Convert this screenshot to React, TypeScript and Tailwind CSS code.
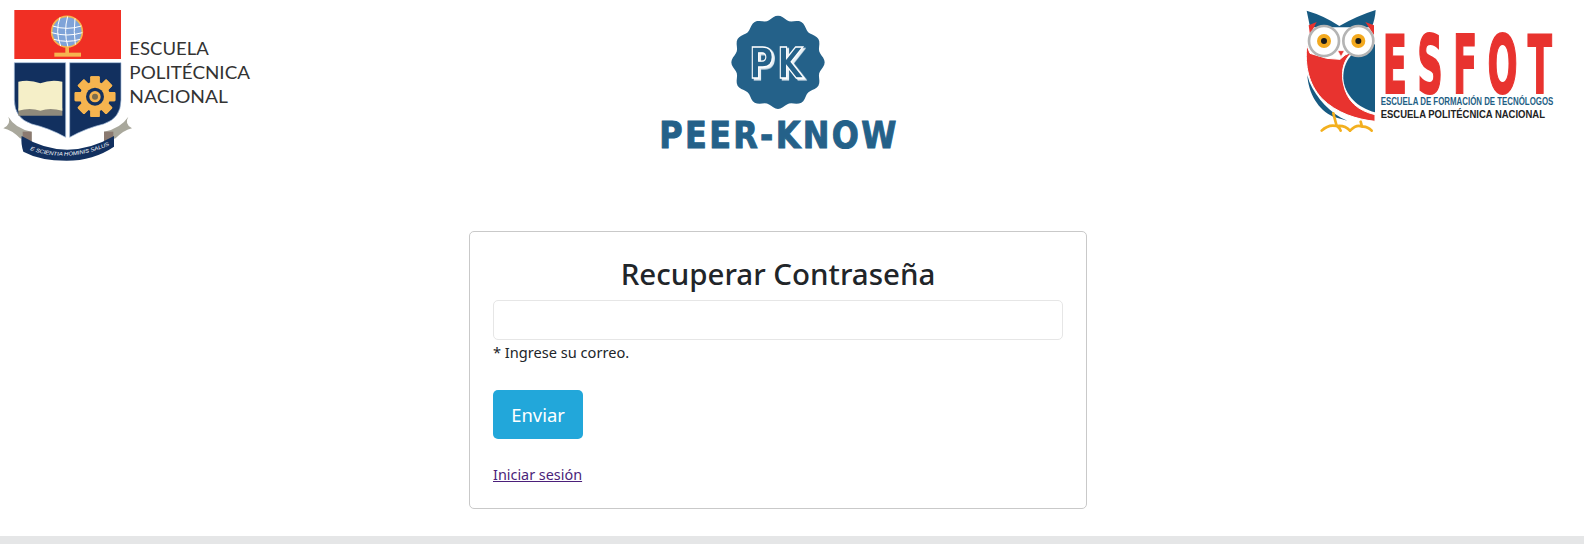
const font = { fontFamily: '"Noto Sans", sans-serif' }

// 12 soft scallops round the PK badge
const badgePath =
  Array.from({ length: 120 }, (_, i) => {
    const a = (i / 120) * Math.PI * 2
    const r = 134 + 6 * Math.cos(a * 12)
    return `${i === 0 ? "M" : "L"}${(414 + r * Math.cos(a)).toFixed(1)} ${(172 + r * Math.sin(a)).toFixed(1)}`
  }).join(" ") + " Z"

function GearTeeth() {
  return (
    <>
      {[0, 45, 90, 135, 180, 225, 270, 315].map((deg) => (
        <rect key={deg} x="271" y="229" width="28" height="122" rx="3" fill="#f6b44f" transform={`rotate(${deg} 285 290)`} />
      ))}
    </>
  )
}

function EpnLogo() {
  return (
    <svg viewBox="0 0 810 510" className="block w-[270px] h-[170px]">
      <rect x="43" y="30" width="320" height="147" fill="#f02f24" />
      <circle cx="201" cy="95" r="46" fill="#7fa3d8" stroke="#f6b44f" strokeWidth="5" />
      <g stroke="#fff" strokeWidth="3" fill="none">
        <path d="M158 78 Q201 92 244 78 M155 98 Q201 112 247 98 M162 118 Q201 130 240 118" />
        <path d="M180 52 Q165 95 182 138 M203 49 Q190 95 204 141 M225 55 Q220 95 226 134" />
      </g>
      <rect x="196" y="140" width="11" height="20" fill="#f6b44f" />
      <rect x="163" y="158" width="80" height="12" fill="#f6b44f" />

      <path d="M10 385 Q35 372 25 350 Q45 385 95 395 V425 L60 415 Q35 390 10 385 Z" fill="#a9a89c" />
      <path d="M396 385 Q372 372 385 350 Q362 385 312 395 V425 L347 415 Q372 390 396 385 Z" fill="#a9a89c" />

      <path d="M43 188 H197 V412 Q150 385 95 372 Q43 355 43 300 Z" fill="#12305f" stroke="#a8bfdc" strokeWidth="2" />
      <path d="M209 188 H363 V300 Q363 355 311 372 Q256 385 209 412 Z" fill="#12305f" stroke="#a8bfdc" strokeWidth="2" />

      <path d="M55 325 H187 V347 H55 Z" fill="#8f8a7c" />
      <path d="M55 245 Q90 238 121 250 Q152 238 187 245 V332 Q150 322 121 332 Q90 322 55 332 Z" fill="#f5efc8" />

      <GearTeeth />
      <circle cx="285" cy="290" r="45" fill="#f6b44f" />
      <circle cx="285" cy="290" r="27" fill="#12305f" />
      <circle cx="285" cy="290" r="17" fill="#f6b44f" />
      <circle cx="285" cy="290" r="9" fill="#7c6d4d" />

      <path d="M68 395 H95 V428 H68 Z" fill="#8b7a70" />
      <path d="M312 395 H340 V428 H312 Z" fill="#8b7a70" />
      <path d="M65 408 Q200 490 342 408 V440 Q280 482 200 482 Q120 482 70 455 Q62 430 65 408 Z" fill="#12305f" />
      <path id="epn-motto" d="M90 450 Q205 490 328 436" fill="none" />
      <text fontSize="16" fill="#fff" fontFamily='"Liberation Sans", sans-serif' fontStyle="italic">
        <textPath href="#epn-motto" textLength="245" lengthAdjust="spacingAndGlyphs">E SCIENTIA HOMINIS SALUS</textPath>
      </text>

      <g fill="#333" fontFamily="Lato, sans-serif" fontSize="54">
        <text x="388" y="166" textLength="238" lengthAdjust="spacingAndGlyphs">ESCUELA</text>
        <text x="388" y="238" textLength="362" lengthAdjust="spacingAndGlyphs">POLITÉCNICA</text>
        <text x="388" y="308" textLength="296" lengthAdjust="spacingAndGlyphs">NACIONAL</text>
      </g>
    </svg>
  )
}

function PeerKnowLogo() {
  return (
    <svg viewBox="0 0 810 480" className="block w-[270px] h-[160px] overflow-visible">
      <path d={badgePath} fill="#246189" />
      <text
        x="328"
        y="218"
        fontSize="130"
        fontWeight="700"
        letterSpacing="14"
        fontFamily='"DejaVu Sans", sans-serif'
        fill="#246189"
        stroke="#fff"
        strokeWidth="4"
        textLength="172"
        lengthAdjust="spacingAndGlyphs"
        className="[filter:drop-shadow(6px_5px_0_#e8f0f5)]"
      >
        PK
      </text>
      <text
        x="58"
        y="430"
        fontSize="110"
        fontWeight="700"
        letterSpacing="8"
        fontFamily='"DejaVu Sans", sans-serif'
        fill="#246189"
        stroke="#246189"
        strokeWidth="3"
        textLength="718"
        lengthAdjust="spacingAndGlyphs"
      >
        PEER-KNOW
      </text>
    </svg>
  )
}

function EsfotLogo() {
  return (
    <svg viewBox="0 0 840 420" className="block w-[280px] h-[140px] overflow-visible">
      <path d="M50 32 Q105 48 148 78 Q200 48 257 30 Q255 60 245 82 H60 Q55 55 50 32 Z" fill="#175a82" />
      <path d="M56 76 L80 66 L60 105 Z M252 76 L226 66 L252 105 Z" fill="#e8332f" />
      <path d="M52 225 C55 280 85 330 130 350 L172 362 C120 340 80 295 58 245 Z" fill="#175a82" />
      <path
        d="M50 135 C45 200 55 250 95 295 C140 340 200 358 255 364 V344 C205 332 170 305 160 250 C150 200 170 160 205 148 L165 165 L150 178 L110 175 L60 160 Z"
        fill="#e8332f"
        stroke="#fff"
        strokeWidth="3"
      />
      <path d="M255 133 C190 140 158 185 160 235 C162 285 205 325 255 337 Z" fill="#175a82" />
      <circle cx="102" cy="123" r="45" fill="#fff" stroke="#b4b4b4" strokeWidth="8" />
      <circle cx="205" cy="123" r="45" fill="#fff" stroke="#b4b4b4" strokeWidth="8" />
      <circle cx="102" cy="123" r="21" fill="#f3a91f" />
      <circle cx="205" cy="123" r="21" fill="#f3a91f" />
      <circle cx="102" cy="123" r="9" fill="#1b1b1b" />
      <circle cx="205" cy="123" r="9" fill="#1b1b1b" />
      <path d="M143 152 L153 170 L163 152 Z" fill="#e8332f" stroke="#fff" strokeWidth="2" />
      <g fill="none" stroke="#f3b01f" strokeWidth="8" strokeLinecap="round">
        <path d="M130 340 L140 378 M95 392 Q115 372 140 378 Q165 375 180 392 M140 378 Q150 385 152 392" />
        <path d="M212 365 L216 380 M180 392 Q200 372 216 380 Q232 378 245 392" />
      </g>
      <text
        x="278"
        y="278"
        fontSize="242"
        fontWeight="700"
        letterSpacing="70"
        fontFamily='"DejaVu Sans", sans-serif'
        fill="#e8332f"
        stroke="#e8332f"
        strokeWidth="6"
        textLength="539"
        lengthAdjust="spacingAndGlyphs"
      >
        ESFOT
      </text>
      <text x="272" y="315" fontSize="33" fontWeight="700" fontFamily='"Liberation Sans", sans-serif' fill="#1f5f85" textLength="518" lengthAdjust="spacingAndGlyphs">
        ESCUELA DE FORMACIÓN DE TECNÓLOGOS
      </text>
      <text x="272" y="353" fontSize="30" fontWeight="700" fontFamily='"Liberation Sans", sans-serif' fill="#222" textLength="493" lengthAdjust="spacingAndGlyphs">
        ESCUELA POLITÉCNICA NACIONAL
      </text>
    </svg>
  )
}

export default function App() {
  return (
    <div className="flex flex-col h-[544px] bg-white text-[#212529] overflow-hidden" style={font}>
      <header className="grid grid-cols-[640px_650px_280px] h-[170px]">
        <EpnLogo />
        <div className="pt-[5px]">
          <PeerKnowLogo />
        </div>
        <EsfotLogo />
      </header>

      <main className="flex-1 pt-[61px] pl-[469px]">
        <div className="w-[618px] h-[278px] border border-[#c9c9c9] rounded-[5px] px-[23px] pt-[16px]">
          <h1 className="text-[29.5px] leading-[52px] font-medium text-center">Recuperar Contraseña</h1>
          <input
            type="text"
            className="block w-full h-[40px] border border-[#e6e6e6] rounded-[5px] bg-white"
          />
          <p className="text-[14.6px] leading-[24px]">* Ingrese su correo.</p>
          <button className="block w-[90px] h-[49px] mt-[26px] bg-[#22a7da] text-white text-[18.4px] rounded-[5px]">
            Enviar
          </button>
          <a href="#" className="block w-fit mt-[24px] text-[14.4px] leading-[24px] text-[#4b1f7a] underline">
            Iniciar sesión
          </a>
        </div>
      </main>

      <footer className="h-[8px] bg-[#e5e6e7]" />
    </div>
  )
}
